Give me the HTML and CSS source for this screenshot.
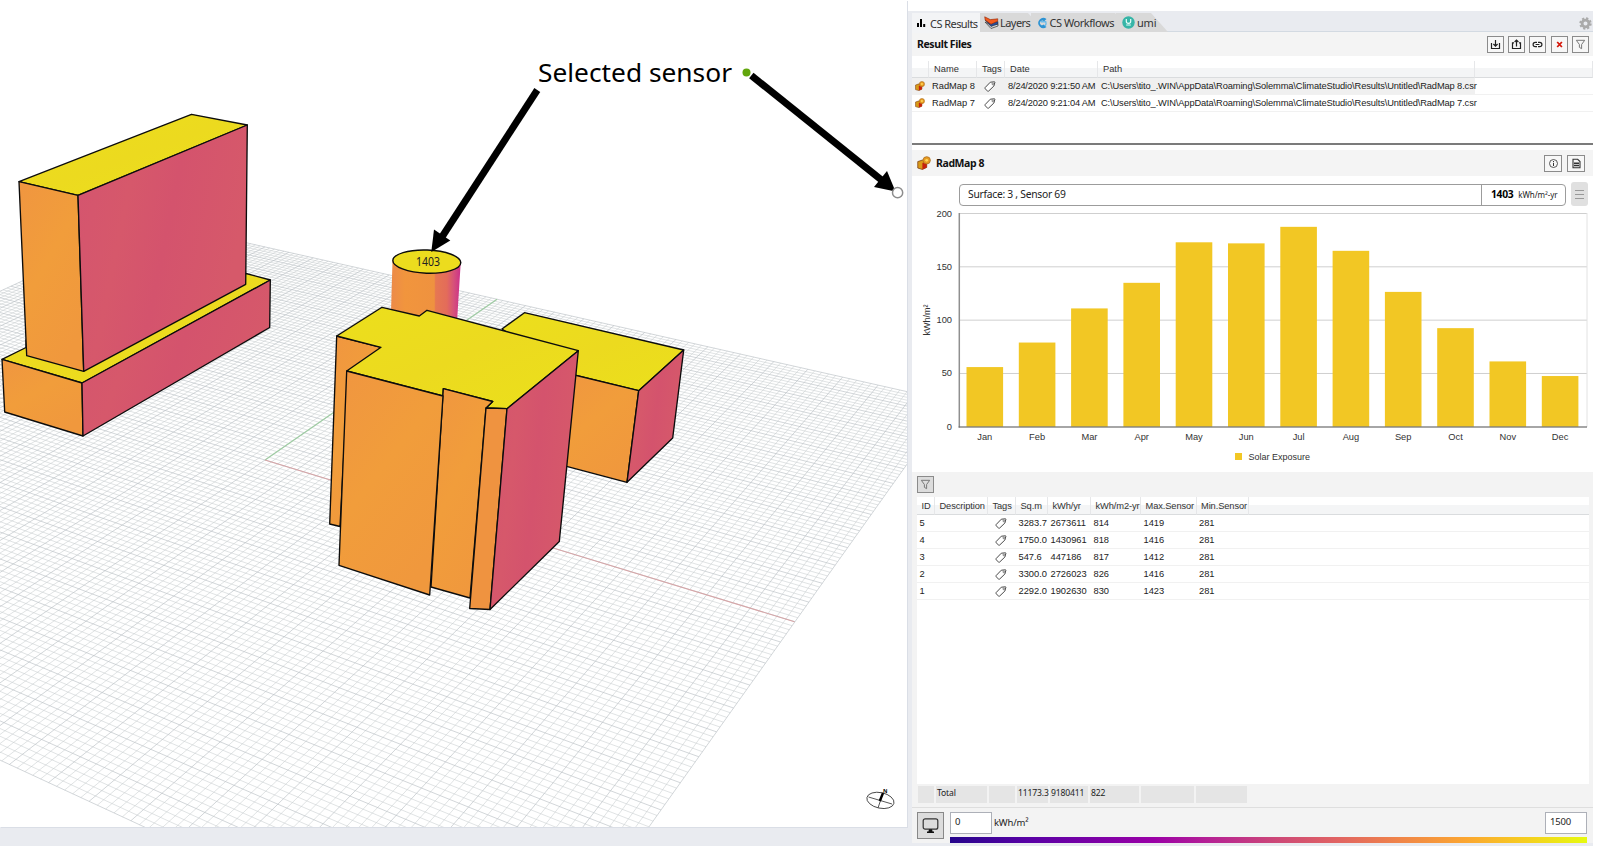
FILE: index.html
```html
<!DOCTYPE html>
<html lang="en">
<head>
<meta charset="utf-8">
<title>ClimateStudio Results</title>
<link rel="stylesheet" href="styles.css">
</head>
<body>
<svg class="defs" width="0" height="0" aria-hidden="true">
  <symbol id="tag" viewBox="0 0 12 11"><path d="M1 6.7 6.3 1.2 10.6.8 10.9 1.2 9.9 5 4.6 10.1Q4 10.5 3.4 9.9L1.1 7.7Q.6 7.2 1 6.7Z" fill="#fff" stroke="#4a4a4a" stroke-width="1"/><circle cx="8.7" cy="2.9" r=".8" fill="none" stroke="#555" stroke-width=".7"/></symbol>
  <symbol id="rad" viewBox="0 0 13 13"><path d="M.7 5.2 5.2 3.7 9 5 9 10.6 5 12.5.7 11.2Z" fill="#d99a18" stroke="#7a3a12" stroke-width=".7"/><path d="M5 6.4 9 5V10.6L5 12.5Z" fill="#c6210e"/><circle cx="9" cy="4" r="3.4" fill="#e79b22" stroke="#a9691b" stroke-width=".7"/><circle cx="9" cy="4" r="1.3" fill="#ffd75a"/></symbol>
  <symbol id="funnel" viewBox="0 0 10 10"><path d="M1.2 1.2H8.8L6 5V8.8L4 7.6V5Z" fill="none" stroke="#777" stroke-width=".9"/></symbol>
</svg>
<main class="app">
  <section class="viewport">
    <svg class="scene" width="907" height="827" viewBox="0 0 907 827">
      <defs>
        <linearGradient id="cyl"><stop offset="0" stop-color="#ec8a49"/><stop offset=".2" stop-color="#f1953d"/><stop offset=".62" stop-color="#ef923f"/><stop offset=".64" stop-color="#e67752"/><stop offset=".8" stop-color="#e36c5a"/><stop offset=".9" stop-color="#d6517a"/><stop offset="1" stop-color="#cb2f8a"/></linearGradient>
        <linearGradient id="or" x2=".6" y2="1"><stop offset="0" stop-color="#f09640"/><stop offset=".5" stop-color="#f19d3b"/><stop offset="1" stop-color="#f0983d"/></linearGradient>
        <linearGradient id="pk" x2="1" y2=".3"><stop offset="0" stop-color="#d4546f"/><stop offset=".35" stop-color="#d6586b"/><stop offset=".6" stop-color="#d4536d"/><stop offset="1" stop-color="#d6596a"/></linearGradient>
        <linearGradient id="ye" x2="1" y2="1"><stop offset="0" stop-color="#ecdf1c"/><stop offset=".5" stop-color="#ecda1f"/><stop offset="1" stop-color="#ebe01b"/></linearGradient>
      </defs>
      <path id="minor" class="minor"/>
      <path id="major" class="major"/>
      <path class="axis-y" d="M265 460 497 299.3"/>
      <path class="axis-x" d="M265 460 794.5 621.7"/>
      <g class="solid">
        <path fill="url(#ye)" d="M2 359.3 26 347.5V340L246 273.5 270.3 280 82 383Z"/>
        <path fill="url(#or)" d="M2 359.3 82 383 83 436 4.7 412Z"/>
        <path fill="url(#pk)" d="M82 383 270.3 280 269.7 327.5 83 436Z"/>
        <path fill="url(#ye)" d="M19 181.7 191.5 114.3 247.3 125 78 195.3Z"/>
        <path fill="url(#or)" d="M19 181.7 78 195.3 83.7 371.3 26.7 355.7Z"/>
        <path fill="url(#pk)" d="M78 195.3 247.3 125 245.7 284.3 83.7 371.3Z"/>
      </g>
      <path fill="url(#cyl)" d="M392.5 261 460.7 263 457 322 391 312Z"/>
      <ellipse class="cap" cx="426.8" cy="261.6" rx="34" ry="11.6" transform="rotate(2 427 261.6)"/>
      <text class="cap-value" x="416" y="265.5" textLength="24" lengthAdjust="spacingAndGlyphs">1403</text>
      <g class="solid">
        <path fill="url(#ye)" d="M502 329 524.5 312.7 683.7 350 638.7 390.7 570 374Z"/>
        <path fill="url(#or)" d="M560 371.5 638.7 390.7 627 482.3 560 464.6Z"/>
        <path fill="url(#pk)" d="M638.7 390.7 683.7 350 672.7 438 627 482.3Z"/>
        <path fill="url(#or)" d="M336.7 336 381 347.3 360 371 346.7 400 340 526.5 329.7 524Z"/>
        <path fill="url(#ye)" d="M336.7 336 382 307.3 419.3 316 427 310.3 578.3 350.7 507 408.7 486 408 492.7 401.5 443.3 388.7 443 396 346.7 371 381 347.3Z"/>
        <path fill="url(#or)" d="M443.3 388.7 492.7 401.5 486 408 470 598 431 587Z"/>
        <path fill="url(#or)" d="M346.7 371 443 396 429.7 595 339 565.3Z"/>
        <path fill="#ef9340" d="M486 408 507 408.7 490 609.5 469.7 608.5Z"/>
        <path fill="url(#pk)" d="M507 408.7 578.3 350.7 559.3 541.5 490 609.5Z"/>
      </g>
      <path class="shaft" d="M537.3 90 440 240"/>
      <path d="M431.3 252 434 229.5 450.3 240.5Z"/>
      <path class="shaft" d="M751.3 75.5 884 182"/>
      <path d="M895.5 191.5 887 171 874 187Z"/>
      <circle cx="746.5" cy="72.4" r="4" fill="#62a60d"/>
      <circle cx="897.6" cy="192.7" r="5.1" fill="#fff" stroke="#8d8d8d" stroke-width="1.5"/>
      <text class="callout" x="538" y="81.5" textLength="194" lengthAdjust="spacingAndGlyphs">Selected sensor</text>
      <g fill="none" stroke="#444" stroke-width=".9"><ellipse cx="880.5" cy="800.3" rx="13.8" ry="7.8" transform="rotate(12 880 800)"/><path d="M868.5 797 892 804M878 808 883 793"/><path d="M879.8 801 883 793" stroke="#000" stroke-width="2.4"/></g>
      <text class="north" x="883" y="792.5">N</text>
    </svg>
  </section>

  <aside class="panel">
    <nav class="tabs">
      <div class="tab active"><svg width="10" height="10" viewBox="0 0 10 10"><path d="M1 9V5H3V9ZM4 9V1H6V9ZM7.2 9V6H9.2V9Z"/></svg><span class="t1">CS Results</span></div>
      <div class="tab layers"><svg width="15" height="13" viewBox="0 0 15 13"><path d="M1 6 7 12.5 14 10 14 8 7 9Z" fill="#d8d8d8" stroke="#333" stroke-width=".7"/><path d="M1 4 7 10.5 14 8V5.5L7 7Z" fill="#244f9d" stroke="#222" stroke-width=".5"/><path d="M.7.8 6.3 3.6 13.8 2.8 13.6 5.2 7 8.3 1.2 4Z" fill="#f25a1d" stroke="#8f2508" stroke-width=".6"/></svg><span class="t2">Layers</span></div>
      <div class="tab flows"><svg width="12" height="12" viewBox="0 0 12 12"><path d="M10.5 2.1A5 5 0 1 0 10.5 9.9L7.8 7.6A2.3 2.3 0 1 1 8 4.4Z" fill="#2d93d3"/><path d="M4.6 4.8H9.8Q10.8 7 9 9.3" fill="none" stroke="#6bbbe9" stroke-width="1.4"/></svg><span class="t3">CS Workflows</span></div>
      <div class="tab umi"><svg width="13" height="13" viewBox="0 0 13 13"><circle cx="6.5" cy="6.5" r="6.2" fill="#36b5a7"/><path d="M4.3 3V5.2A2.1 2.1 0 0 0 8.7 5.2V3M4.2 9H8.8" fill="none" stroke="#e8fffb" stroke-width="1.2"/></svg><span class="t4">umi</span></div>
      <svg class="gear" width="13" height="13" viewBox="-6.5 -6.5 13 13"><circle r="3.4" fill="none" stroke="#aaa" stroke-width="2.8"/><circle r="5.2" fill="none" stroke="#aaa" stroke-width="2" stroke-dasharray="2.2 1.88"/></svg>
    </nav>

    <header class="bar files-bar">
      <h2 class="h-files">Result Files</h2>
      <div class="buttons">
        <button class="sq"><svg width="11" height="11" viewBox="0 0 11 11"><path d="M1.5 4V9.5H9.5V4M5.5 1V7M3.4 5 5.5 7.2 7.6 5" fill="none" stroke="#222" stroke-width="1.2"/></svg></button>
        <button class="sq"><svg width="11" height="11" viewBox="0 0 11 11"><path d="M3 3.8H1.5V9.5H9.5V3.8H8M5.5 7.5V1.2M3.6 3 5.5 1 7.4 3" fill="none" stroke="#222" stroke-width="1.2"/></svg></button>
        <button class="sq"><svg width="11" height="11" viewBox="0 0 11 11"><path d="M5 3.3H3.3A2.2 2.2 0 0 0 3.3 7.7H5M6 3.3H7.7A2.2 2.2 0 0 1 7.7 7.7H6M3.6 5.5H7.4" fill="none" stroke="#222" stroke-width="1.2"/></svg></button>
        <button class="sq"><svg width="11" height="11" viewBox="0 0 11 11"><path d="M3.2 3 7.9 8M7.9 3 3.2 8" stroke="#d5180b" stroke-width="1.8"/></svg></button>
        <button class="sq"><svg width="11" height="11"><use href="#funnel"/></svg></button>
      </div>
    </header>

    <div class="files grid">
      <div class="row head"><span></span><span>Name</span><span>Tags</span><span>Date</span><span>Path</span><span></span></div>
      <div class="row selected"><span><svg width="10" height="10"><use href="#rad"/></svg></span><span>RadMap 8</span><span><svg width="12" height="11"><use href="#tag"/></svg></span><span class="date">8/24/2020 9:21:50 AM</span><span class="path">C:\Users\tito_.WIN\AppData\Roaming\Solemma\ClimateStudio\Results\Untitled\RadMap 8.csr</span><span></span></div>
      <div class="row"><span><svg width="10" height="10"><use href="#rad"/></svg></span><span>RadMap 7</span><span><svg width="12" height="11"><use href="#tag"/></svg></span><span class="date">8/24/2020 9:21:04 AM</span><span class="path">C:\Users\tito_.WIN\AppData\Roaming\Solemma\ClimateStudio\Results\Untitled\RadMap 7.csr</span><span></span></div>
    </div>

    <header class="bar map-bar">
      <svg width="14" height="14"><use href="#rad"/></svg>
      <h2 class="h-map">RadMap 8</h2>
      <div class="buttons">
        <button class="sq"><svg width="11" height="11" viewBox="0 0 11 11"><circle cx="5.5" cy="5.5" r="4" fill="none" stroke="#444" stroke-width=".9"/><path d="M5.5 4.8V8M5.5 3V4" stroke="#333"/></svg></button>
        <button class="sq"><svg width="11" height="11" viewBox="0 0 11 11"><path d="M2 1.3H6.7L9 3.6V9.7H2Z" fill="none" stroke="#333" stroke-width="1.1"/><path d="M3 5.2H8M3 7.5H8" stroke="#333" stroke-width="1.4"/></svg></button>
      </div>
    </header>

    <div class="sensor">
      <div class="sensor-box"><span class="sensor-name">Surface: 3 , Sensor 69</span><span class="sensor-value"><b>1403</b><small>kWh/m²-yr</small></span></div>
      <button class="menu"><i></i><i></i><i></i></button>
    </div>

    <svg class="chart" width="681" height="265" viewBox="912 207 681 265">
      <g id="plot"></g>
      <text class="lab" transform="translate(929.5 335.5) rotate(-90)" textLength="31" lengthAdjust="spacingAndGlyphs">kWh/m²</text>
      <rect x="1235" y="453" width="7" height="7" fill="#f2c724"/>
      <text class="lab" x="1248.5" y="460" textLength="61.5" lengthAdjust="spacingAndGlyphs">Solar Exposure</text>
    </svg>

    <div class="surfaces">
      <div class="tools"><button class="sq on"><svg width="11" height="11"><use href="#funnel"/></svg></button></div>
      <div class="table grid">
        <div class="row head"><span>ID</span><span>Description</span><span>Tags</span><span>Sq.m</span><span>kWh/yr</span><span>kWh/m2-yr</span><span>Max.Sensor</span><span>Min.Sensor</span><span></span></div>
        <div class="row"><span>5</span><span></span><span><svg width="12" height="11"><use href="#tag"/></svg></span><span>3283.7</span><span>2673611</span><span>814</span><span>1419</span><span>281</span><span></span></div>
        <div class="row"><span>4</span><span></span><span><svg width="12" height="11"><use href="#tag"/></svg></span><span>1750.0</span><span>1430961</span><span>818</span><span>1416</span><span>281</span><span></span></div>
        <div class="row"><span>3</span><span></span><span><svg width="12" height="11"><use href="#tag"/></svg></span><span>547.6</span><span>447186</span><span>817</span><span>1412</span><span>281</span><span></span></div>
        <div class="row"><span>2</span><span></span><span><svg width="12" height="11"><use href="#tag"/></svg></span><span>3300.0</span><span>2726023</span><span>826</span><span>1416</span><span>281</span><span></span></div>
        <div class="row"><span>1</span><span></span><span><svg width="12" height="11"><use href="#tag"/></svg></span><span>2292.0</span><span>1902630</span><span>830</span><span>1423</span><span>281</span><span></span></div>
      </div>
      <div class="totals"><span></span><span>Total</span><span></span><span>11173.3</span><span>9180411</span><span>822</span><span></span><span></span></div>
    </div>

    <footer class="legend">
      <button class="display"><svg width="17" height="17" viewBox="0 0 17 17"><rect x="1.2" y="1.8" width="14.6" height="10.4" rx="2" fill="none" stroke="#333" stroke-width="1.2"/><path d="M7 12.2H10L10.6 14.5H12V16H5V14.5H6.4Z" fill="#111"/></svg></button>
      <div class="scale">
        <div class="limits"><span class="field">0</span><span class="unit">kWh/m²</span><span class="field max">1500</span></div>
        <div class="ramp"></div>
      </div>
    </footer>
  </aside>
</main>
<script src="scene.js"></script>
</body>
</html>
```
FILE: styles.css
```css
* { box-sizing: border-box; }
body { margin: 0; width: 1600px; height: 846px; overflow: hidden; background: #fff; font-family: "Noto Sans", "Open Sans", sans-serif; color: #222; }
h2 { margin: 0; }
button { padding: 0; font: inherit; }
.defs { display: block; position: absolute; }
.app { display: grid; grid-template-columns: 912px 681px; height: 846px; background: linear-gradient(#e9ebf0, #e9ebf0) no-repeat 0 11px / 1593px 835px; }
.viewport { width: 907px; height: 827px; background: #fff; box-shadow: 1px 1px 0 #dadee6; }
.scene { display: block; }
.minor { fill: none; stroke: #c6cbce; stroke-width: .55; }
.major { fill: none; stroke: #b9bfc4; stroke-width: .65; }
.axis-x { stroke: #d6a5a7; stroke-width: 1.1; }
.axis-y { stroke: #9fcda3; stroke-width: 1.1; }
.solid path { stroke: #0c0c0c; stroke-width: 1.35; stroke-linejoin: round; }
.cap { fill: #ecdc1e; stroke: #0c0c0c; stroke-width: 1.4; }
.cap-value { font-size: 12px; fill: #222; }
.shaft { stroke: #000; stroke-width: 7; fill: none; }
.callout { font-size: 26px; fill: #000; }
.north { font-size: 5.5px; font-weight: 700; fill: #000; }

.panel { margin-top: 11px; height: 832px; display: flex; flex-direction: column; background: #fff; overflow: hidden; }
.tabs { height: 21px; flex: none; display: flex; background: #e9ebf0; border-bottom: 1px solid #d3dae2; padding-top: 2px; }
.tab { display: flex; align-items: center; height: 19px; font-size: 11px; color: #333; background: #d9d9d9; clip-path: polygon(0 0, calc(100% - 17px) 0, 100% 100%, 0 100%); white-space: nowrap; }
.tab svg { flex: none; }
.active { width: 85px; padding-left: 4px; gap: 4px; background: #f3f4f6; height: 20px; }
.layers { width: 65px; margin-left: -17px; padding-left: 4px; gap: 1px; }
.flows { width: 101px; margin-left: -14px; padding-left: 5px; gap: 1.5px; }
.umi { width: 52px; margin-left: -16px; padding-left: 6px; gap: 2px; }
.t1 { letter-spacing: -.55px; }
.t2 { letter-spacing: -.55px; }
.t3 { letter-spacing: -.45px; }
.t4 { letter-spacing: -.2px; }
.gear { margin: 4px 1px 0 auto; }
.bar { display: flex; align-items: center; flex: none; background: #f4f4f4; }
.files-bar { height: 24px; padding: 0 4px 0 5px; }
.map-bar { height: 26px; padding: 0 8px 0 5px; margin-top: 5px; }
.bar h2 { font-size: 10.5px; font-weight: 700; color: #111; letter-spacing: -.4px; }
.map-bar h2 { margin-left: 5px; }
.buttons { display: flex; gap: 4.3px; margin-left: auto; }
.map-bar .buttons { gap: 5px; }
.sq { width: 17px; height: 17px; border: 1.4px solid #8b8b8b; background: #f7f7f7; display: grid; place-items: center; }
.map-bar .sq { width: 18px; }
.on { background: #dcdcdc; }

.row { display: grid; font: 9.3px "Liberation Sans", Arial, sans-serif; height: 17px; align-items: center; white-space: nowrap; }
.row span { height: 100%; display: flex; align-items: center; border-bottom: 1px solid #f1f1f1; }
.head span { background: linear-gradient(#fff 0 45%, #f4f5f6 45%); border-right: 1px solid #e6e7e9; border-bottom: 1px solid #dadcde; color: #333; }
.files { height: 89px; flex: none; padding-top: 5px; border-bottom: 2.4px solid #7b7b7b; }
.files .row { grid-template-columns: 17px 48px 28px 93px 377px 1fr; }
.files .row span { padding-left: 3px; }
.files .row span:nth-child(3) { padding-left: 7px; }
.files .head span { padding-left: 5px; }
.files .head span:nth-child(3) { padding-left: 5px; }
.selected span:not(:last-child) { background: #f0f0f0; }
.date { letter-spacing: -.18px; }
.path { letter-spacing: -.12px; }

.sensor { display: flex; height: 31px; flex: none; padding: 6px 5px 0 47px; gap: 5px; }
.sensor-box { width: 607px; height: 22px; margin-top: 2px; border: 1.4px solid #9c9c9c; border-radius: 4px; display: flex; justify-content: space-between; font-size: 10.3px; }
.sensor-name { padding-left: 8px; line-height: 19px; letter-spacing: -.27px; }
.sensor-value { width: 84px; border-left: 1px solid #9c9c9c; padding-left: 9px; line-height: 19px; white-space: nowrap; }
.sensor-value b { color: #000; letter-spacing: -.3px; }
.sensor-value small { font-size: 8px; margin-left: 5px; letter-spacing: -.1px; }
.menu { width: 17px; height: 24px; border: 0; border-radius: 3px; background: #e0e0e0; display: flex; flex-direction: column; align-items: center; justify-content: center; gap: 3px; }
.menu i { width: 9px; height: 1px; background: #999; }
.chart { display: block; flex: none; }
.lab { font: 9.3px "Liberation Sans", Arial, sans-serif; fill: #333; }

.surfaces { background: #f3f3f3; height: 336px; flex: none; padding: 0 4px 0 5px; border-bottom: 1px solid #dedede; }
.tools { height: 25px; padding-top: 4px; }
.table { height: 287px; background: #fff; }
.table .row { grid-template-columns: 18px 53px 28px 32px 43px 50px 55.5px 52.5px 1fr; }
.table .row span { padding-left: 2.5px; }
.table .row span:nth-child(3) { padding-left: 7px; }
.table .head { height: 18px; }
.table .head span, .table .head span:nth-child(3) { padding-left: 4.5px; letter-spacing: -.1px; }
.table .head span:last-child { border-right: 0; }
.totals { display: grid; grid-template-columns: 16px 51px 26px 31px 38px 49px 53px 51px; gap: 2px; height: 17px; margin: 2px 0 0 1px; font-size: 8.6px; line-height: 14px; white-space: nowrap; }
.totals span { background: #e5e5e5; padding-left: 1px; letter-spacing: -.15px; }

.legend { display: flex; gap: 6px; height: 36px; flex: none; background: #f3f3f3; padding: 4px 6px 0 5px; }
.display { width: 27px; height: 27px; border: 1.4px solid #888; background: #dcdcdc; display: grid; place-items: center; }
.scale { flex: 1; }
.limits { display: flex; height: 25px; font-size: 9.5px; align-items: flex-start; }
.field { width: 42px; height: 22px; border: 1.4px solid #adb0b8; background: #fff; padding-left: 4px; line-height: 17px; letter-spacing: -.2px; }
.unit { margin-left: 2px; line-height: 21px; letter-spacing: -.2px; }
.max { margin-left: auto; }
.ramp { height: 6.5px; background: linear-gradient(90deg, #26058c, #5801a5 12%, #9a00a6 32%, #b41f96 40%, #cc4778 51%, #e16462 61%, #f08648 71%, #fba631 81%, #f6cc21 90%, #e6fa10); }
```
FILE: scene.js
```js
// Ground plane: unit square [-1, 1] projected to the viewport.
function project(x, y) {
  const w = 1 - 0.1655 * x + 0.2236 * y;
  return ((398.4 * x + 343.4 * y + 265) / w).toFixed(2) + " " + ((58.8 * x - 93.8 * y + 460) / w).toFixed(2);
}
const CELLS = 70;
let minor = "", major = "";
for (let i = -CELLS; i <= CELLS; i++) {
  const t = i / CELLS;
  const seg = "M" + project(t, -1) + "L" + project(t, 1) + "M" + project(-1, t) + "L" + project(1, t);
  if (i % 5 === 0) major += seg; else minor += seg;
}
document.getElementById("minor").setAttribute("d", minor);
document.getElementById("major").setAttribute("d", major);

// Monthly solar exposure chart.
const months = ["Jan", "Feb", "Mar", "Apr", "May", "Jun", "Jul", "Aug", "Sep", "Oct", "Nov", "Dec"];
const values = [56, 79, 111, 135, 173, 172, 187.5, 165, 126.5, 92.5, 61.3, 47.6];
const base = 426.8, perUnit = 1.0665;
let plot = "";
for (let v = 0; v <= 200; v += 50) {
  const y = base - v * perUnit;
  if (v) plot += `<path d="M959 ${y}H1587" stroke="#cfcfcf"/>`;
  plot += `<text class="lab" x="952" y="${y + 3}" text-anchor="end">${v}</text>`;
}
plot += `<path d="M1587 213V427" stroke="#e2e2e2"/>`;
values.forEach((v, i) => {
  const c = 984.8 + 52.3 * i, h = v * perUnit;
  plot += `<rect x="${c - 18.3}" y="${base - h}" width="36.6" height="${h}" fill="#f2c724"/>`;
  plot += `<text class="lab" x="${c}" y="440" text-anchor="middle">${months[i]}</text>`;
});
plot += `<path d="M959.3 213V427.5" stroke="#8f8f8f" stroke-width="1.5"/><path d="M958.6 426.9H1587" stroke="#6b6b6b" stroke-opacity=".8" stroke-width="1.5"/>`;
document.getElementById("plot").innerHTML = plot;
```
